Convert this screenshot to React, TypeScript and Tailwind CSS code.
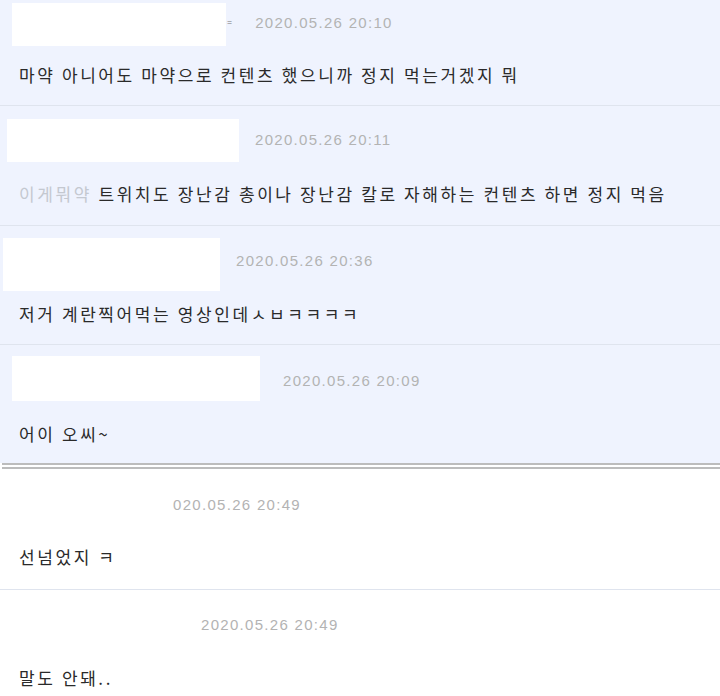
import React from 'react';

type Comment = {
	pt: number;
	box?: { ml: number; w: number; h: number };
	mark?: boolean;
	dateMl: number;
	dateShift?: number;
	date: string;
	mt: number;
	pb: number;
	prefix?: string;
	text: string;
};

const highlighted: Comment[] = [
	{ pt: 3, box: { ml: 12, w: 214, h: 43 }, mark: true, dateMl: 29, dateShift: -2, date: '2020.05.26 20:10', mt: 19, pb: 20, text: '마약 아니어도 마약으로 컨텐츠 했으니까 정지 먹는거겠지 뭐' },
	{ pt: 13, box: { ml: 7, w: 232, h: 43 }, dateMl: 16, dateShift: -1, date: '2020.05.26 20:11', mt: 22, pb: 21, prefix: '이게뭐약', text: '트위치도 장난감 총이나 장난감 칼로 자해하는 컨텐츠 하면 정지 먹음' },
	{ pt: 12, box: { ml: 3, w: 217, h: 53 }, dateMl: 16, dateShift: -4, date: '2020.05.26 20:36', mt: 13, pb: 20, text: '저거 계란찍어먹는 영상인데ㅅㅂㅋㅋㅋㅋ' },
	{ pt: 11, box: { ml: 12, w: 248, h: 45 }, dateMl: 23, dateShift: 2, date: '2020.05.26 20:09', mt: 23, pb: 19, text: '어이 오씨~' },
];

const replies: Comment[] = [
	{ pt: 26, dateMl: 173, date: '020.05.26 20:49', mt: 32, pb: 22, text: '선넘었지 ㅋ' },
	{ pt: 25, dateMl: 201, date: '2020.05.26 20:49', mt: 33, pb: 10, text: '말도 안돼..' },
];

const bodyFont = { fontFamily: '"Noto Sans CJK KR", "Noto Sans", sans-serif' };

const Row: React.FC<{ c: Comment; last?: boolean }> = ({ c, last }) => (
	<div
		className={last ? '' : 'border-b border-[#dfe4ee]'}
		style={{ paddingTop: c.pt, paddingBottom: c.pb }}
	>
		<div className="flex items-center" style={{ height: c.box ? c.box.h : 20 }}>
			{c.box && (
				<div className="h-full bg-white" style={{ marginLeft: c.box.ml, width: c.box.w }} />
			)}
			{c.mark && <span className="ml-px -mt-1 text-[9px] leading-none text-[#777]">=</span>}
			<span
				className="font-['Liberation_Sans',Arial,sans-serif] text-[15px] leading-5 tracking-[1.3px] text-[#b3b3b3]"
				style={{ marginLeft: c.mark ? c.dateMl - 6 : c.dateMl, marginTop: (c.dateShift ?? 0) * 2 }}
			>
				{c.date}
			</span>
		</div>
		<p
			className="pl-[19px] text-[17px] leading-5 tracking-[2.6px] text-[#2a2a2a] whitespace-nowrap"
			style={{ ...bodyFont, marginTop: c.mt }}
		>
			{c.prefix && <span className="text-[#c4c8d0]">{c.prefix} </span>}
			{c.text}
		</p>
	</div>
);

export default function App() {
	return (
		<div className="w-[720px] h-[696px] overflow-hidden bg-white">
			<div className="bg-[#eff3fe]">
				{highlighted.map((c, i) => (
					<Row key={i} c={c} last={i === highlighted.length - 1} />
				))}
			</div>
			<div className="ml-[2px] h-[6px] border-t-2 border-b-2 border-[#bcbcbc] bg-white" />
			<div>
				{replies.map((c, i) => (
					<Row key={i} c={c} last={i === replies.length - 1} />
				))}
			</div>
		</div>
	);
}
